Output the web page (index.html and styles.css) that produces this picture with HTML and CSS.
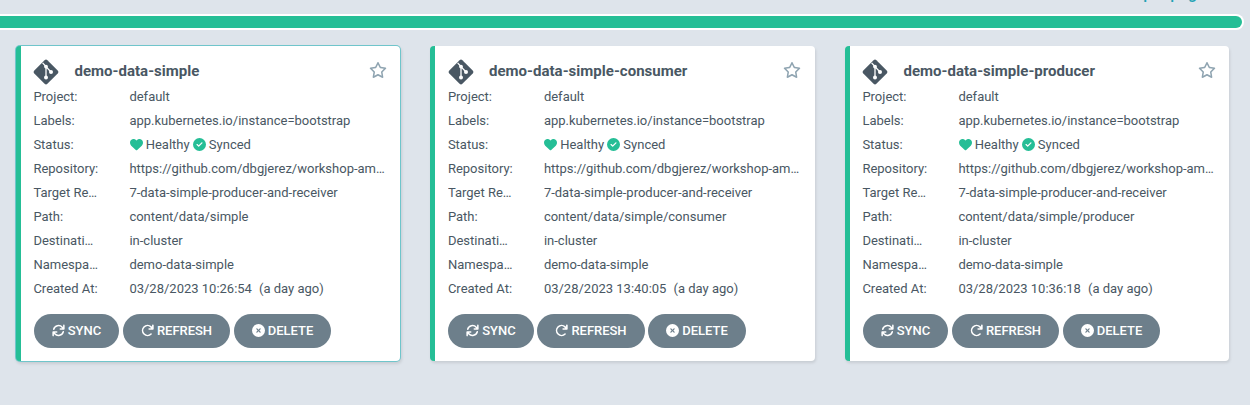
FILE: index.html
```html
<!DOCTYPE html>
<html lang="en">
<head>
<meta charset="utf-8">
<title>Applications</title>
<link rel="stylesheet" href="styles.css">
</head>
<body>
<svg class="sprite" aria-hidden="true">
  <symbol id="git" viewBox="0 0 26 26">
    <path fill="currentColor" d="M11.6 1.3a2 2 0 0 1 2.8 0l10.3 10.3a2 2 0 0 1 0 2.8L14.4 24.7a2 2 0 0 1-2.8 0L1.3 14.4a2 2 0 0 1 0-2.8z"/>
    <path fill="none" stroke="#fff" stroke-width="1.3" d="M9.6 3.9 13 7.5V18.5M13 7.6 18 13"/>
    <g fill="#fff"><circle cx="13" cy="7.6" r="1.9"/><circle cx="13" cy="18.6" r="2"/><circle cx="18" cy="13" r="2"/></g>
  </symbol>
  <symbol id="star" viewBox="0 0 576 512"><path fill="currentColor" d="M287.9 0c9.2 0 17.6 5.2 21.6 13.5l68.6 141.3 153.2 22.6c9 1.3 16.5 7.6 19.3 16.3s.5 18.1-5.9 24.5L433.6 328.4l26.2 155.6c1.5 9-2.2 18.1-9.6 23.5s-17.3 6-25.3 1.7l-137-73.2L151 509.1c-8.1 4.3-17.9 3.7-25.3-1.7s-11.2-14.5-9.7-23.5l26.2-155.6L31.1 218.2c-6.5-6.4-8.7-15.9-5.9-24.5s10.3-14.9 19.3-16.3l153.2-22.6L266.3 13.5C270.4 5.2 278.7 0 287.9 0zm0 79L235.4 187.2c-3.5 7.1-10.2 12.1-18.1 13.3L99 217.9 184.9 303c5.5 5.5 8.1 13.3 6.8 21L171.4 443.7l105.2-56.2c7.1-3.8 15.6-3.8 22.6 0l105.2 56.2L384.2 324.1c-1.3-7.7 1.2-15.5 6.8-21l85.9-85.1L358.6 200.5c-7.8-1.2-14.6-6.1-18.1-13.3L287.9 79z"/></symbol>
  <symbol id="heart" viewBox="0 0 512 512"><path fill="currentColor" d="M47.6 300.4L228.3 469.1c7.5 7 17.4 10.9 27.7 10.9s20.2-3.9 27.7-10.9L464.4 300.4c30.4-28.3 47.6-68 47.6-109.5v-5.8c0-69.9-50.5-129.5-119.4-141C347 36.5 300.6 51.4 268 84L256 96 244 84c-32.6-32.6-79-47.5-124.6-39.9C50.5 55.6 0 115.2 0 185.1v5.8c0 41.5 17.2 81.2 47.6 109.5z"/></symbol>
  <symbol id="check" viewBox="0 0 512 512"><path fill="currentColor" d="M256 512A256 256 0 1 0 256 0a256 256 0 1 0 0 512zM369 209L241 337c-9.4 9.4-24.6 9.4-33.9 0l-64-64c-9.4-9.4-9.4-24.6 0-33.9s24.6-9.4 33.9 0l47 47L335 175c9.4-9.4 24.6-9.4 33.9 0s9.4 24.6 0 33.9z"/></symbol>
  <symbol id="cross" viewBox="0 0 512 512"><path fill="currentColor" d="M256 512A256 256 0 1 0 256 0a256 256 0 1 0 0 512zM175 175c9.4-9.4 24.6-9.4 33.9 0l47 47 47-47c9.4-9.4 24.6-9.4 33.9 0s9.4 24.6 0 33.9l-47 47 47 47c9.4 9.4 9.4 24.6 0 33.9s-24.6 9.4-33.9 0l-47-47-47 47c-9.4 9.4-24.6 9.4-33.9 0s-9.4-24.6 0-33.9l47-47-47-47c-9.4-9.4-9.4-24.6 0-33.9z"/></symbol>
  <symbol id="sync" viewBox="0 0 16 16">
    <g fill="none" stroke="currentColor" stroke-width="1.9" stroke-linecap="round" stroke-linejoin="round">
      <path d="M2.1 6.4A6.1 6.1 0 0 1 12.6 4L14.2 5.7M14.6 1.7V6.1H10.2"/>
      <path d="M13.9 9.6A6.1 6.1 0 0 1 3.4 12L1.8 10.3M1.4 14.3V9.9H5.8"/>
    </g>
  </symbol>
  <symbol id="redo" viewBox="0 0 16 16">
    <path fill="none" stroke="currentColor" stroke-width="2" stroke-linecap="round" stroke-linejoin="round" d="M12.4 12.3A6.1 6.1 0 1 1 12.3 3.6L14.2 5.6M14.6 1.6V6.2H10"/>
  </symbol>
</svg>
<div class="pager">Items per page: 10</div>
<div class="health-bar"><div class="health-fill"></div></div>
<main class="tiles" id="tiles"></main>
<script src="app.js"></script>
</body>
</html>
```
FILE: styles.css
```css
* { box-sizing: border-box; }
body {
  margin: 0;
  height: 405px;
  overflow: hidden;
  background: #dee4eb;
  color: #495763;
  font: 13px/24px Roboto, sans-serif;
}
.sprite { display: none; }
.pager {
  height: 14px;
  padding-right: 18px;
  display: flex;
  justify-content: flex-end;
  align-items: flex-end;
  margin-top: -10px;
  margin-bottom: 10px;
  line-height: 20px;
  color: #1fa3b5;
  font-size: 16px;
  font-weight: 500;
}
.health-bar {
  width: 1244px;
  height: 16px;
  padding: 2px 2px 2px 0;
  background: #fff;
  border-radius: 0 8px 8px 0;
}
.health-fill {
  height: 12px;
  background: #25be96;
  border-radius: 0 6px 6px 0;
}
.tiles {
  display: grid;
  grid-template-columns: repeat(3, 384.5px);
  column-gap: 30px;
  padding: 16px 0 0 15.5px;
}
.tile {
  height: 315px;
  padding: 12px 14px 0 12.9px;
  background: #fff;
  border-left: 5px solid #25be96;
  border-radius: 4px;
  box-shadow: 1px 2px 3px rgba(0, 0, 0, .1);
}
.tile.selected { box-shadow: 0 0 0 1px #6fc5cb, 1px 2px 3px 1px rgba(0, 0, 0, .1); }
.head { display: flex; align-items: center; height: 27px; margin-right: -.7px; }
.git { width: 26px; height: 26px; margin-left: -.3px; }
.title {
  flex: 1;
  margin: 0 0 2px 15.4px;
  font-size: 15px;
  font-weight: 700;
  letter-spacing: .02px;
}
.star { width: 18px; height: 16px; margin-bottom: 3px; color: #8fa4b1; }
.row { display: flex; height: 24px; }
.label, .value {
  overflow: hidden;
  white-space: nowrap;
  text-overflow: ellipsis;
}
.label { width: 66px; margin-right: 30px; }
.value { flex: 1; white-space: pre; }
.ago { margin-left: .6px; }
.state { display: flex; align-items: center; gap: 3.1px; padding-left: .2px; }
.state svg { width: 13px; height: 13px; margin-bottom: 1px; color: #25be96; }
.actions { display: flex; gap: 3.6px; margin: 13px 0 0 .2px; }
.btn {
  display: flex;
  align-items: center;
  gap: 3.2px;
  height: 34px;
  padding: 0 18px;
  border: 0;
  border-radius: 17px;
  background: #6d7f8b;
  color: #fff;
  font: 500 13px/34px Roboto, sans-serif;
  letter-spacing: -.03px;
}
.btn svg { width: 13px; height: 13px; margin-bottom: 1px; }
```
FILE: app.js
```js
const apps = [
  { name: 'demo-data-simple', path: 'content/data/simple', created: '03/28/2023 10:26:54', selected: true },
  { name: 'demo-data-simple-consumer', path: 'content/data/simple/consumer', created: '03/28/2023 13:40:05' },
  { name: 'demo-data-simple-producer', path: 'content/data/simple/producer', created: '03/28/2023 10:36:18' },
];

const icon = (id, cls = '') => `<svg class="${cls}"><use href="#${id}"/></svg>`;
const row = (label, value, cls = '') =>
  `<div class="row"><div class="label">${label}</div><div class="value ${cls}">${value}</div></div>`;

document.getElementById('tiles').innerHTML = apps.map(app => `
  <section class="tile${app.selected ? ' selected' : ''}">
    <div class="head">${icon('git', 'git')}<h2 class="title">${app.name}</h2>${icon('star', 'star')}</div>
    ${row('Project:', 'default')}
    ${row('Labels:', 'app.kubernetes.io/instance=bootstrap')}
    ${row('Status:', `${icon('heart')}<span>Healthy</span>${icon('check')}<span>Synced</span>`, 'state')}
    ${row('Repository:', 'https://github.com/dbgjerez/workshop-ambassador')}
    ${row('Target Revision:', '7-data-simple-producer-and-receiver')}
    ${row('Path:', app.path)}
    ${row('Destination:', 'in-cluster')}
    ${row('Namespace:', 'demo-data-simple')}
    ${row('Created At:', `${app.created}  <span class="ago">(a day ago)</span>`)}
    <div class="actions">
      <button class="btn">${icon('sync')}<span>SYNC</span></button>
      <button class="btn">${icon('redo')}<span>REFRESH</span></button>
      <button class="btn">${icon('cross')}<span>DELETE</span></button>
    </div>
  </section>`).join('');
```
